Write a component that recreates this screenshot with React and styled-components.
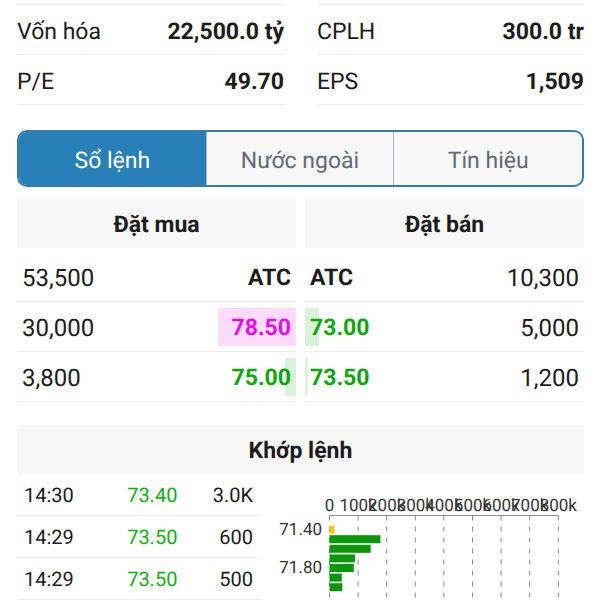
import { useState } from "react";
import styled, { createGlobalStyle } from "styled-components";

const GlobalStyle = createGlobalStyle`
  * {
    box-sizing: border-box;
  }
  body {
    margin: 0;
    background: #fff;
    color: #1c1c1c;
    font-family: Roboto, "Noto Sans", sans-serif;
    font-size: 23px;
    line-height: 28px;
    text-rendering: geometricPrecision;
  }
`;
const Page = styled.main`
  padding: 4px 16px 0 17px;
`;
const Stats = styled.dl`
  display: grid;
  grid-template-columns: 1fr 1fr;
  column-gap: 33px;
  margin: 0;
`;
const Stat = styled.div`
  display: flex;
  align-items: center;
  justify-content: space-between;
  height: 50px;
  padding-top: 4px;
  border-bottom: 1px solid #efefef;

  &:nth-child(-n + 2) {
    height: 51px;
    border-top: 1px solid #efefef;
  }
`;
const StatName = styled.dt``;
const StatValue = styled.dd`
  margin: 0;
  font-weight: 700;
`;
const Tabs = styled.div`
  display: grid;
  grid-template-columns: repeat(3, 1fr);
  height: 57px;
  margin: 25px 0 12px;
  overflow: hidden;
  border: 2px solid #3a7ca8;
  border-radius: 10px;
  background: #f7f7f7;
`;
const Tab = styled.button`
  border: 0;
  border-right: 1px solid #b0b6be;
  padding: 4px 0 0;
  background: ${(props) => (props.$active ? "#2980b9" : "transparent")};
  color: ${(props) => (props.$active ? "#fff" : "#636a73")};
  font: inherit;
  text-rendering: inherit;
  cursor: pointer;

  &:last-child {
    border-right: 0;
  }
`;
const Books = styled.div`
  display: grid;
  grid-template-columns: 1fr 1fr;
  gap: 9px;
`;
const BookTable = styled.table`
  width: 100%;
  border-collapse: separate;
  border-spacing: 0;
`;
const BookTitle = styled.th`
  height: 49px;
  padding: 2px 0 0;
  background: #f7f7f7;
  font-weight: 700;
`;
const BookRow = styled.tr`
  height: 50px;

  &:first-child {
    height: 54px;
  }
  &:first-child td {
    padding-top: 6px;
  }
`;
const BookCell = styled.td`
  width: 50%;
  padding: 2px 5px 0;
  border-bottom: 1px solid #efefef;
  font-size: 24px;
  text-align: ${(props) => props.$align};
`;
const PriceCell = styled(BookCell)`
  color: ${(props) => props.$color};
  font-size: 23px;
  font-weight: 700;
  background: linear-gradient(${(props) => props.$fill}, ${(props) => props.$fill})
    ${(props) => props.$align} center / ${(props) => props.$depth}% 38px no-repeat;
`;
const SectionTitle = styled.h2`
  height: 49px;
  margin: 23px 0 0;
  padding-top: 2px;
  background: #f7f7f7;
  font-size: 23px;
  font-weight: 700;
  line-height: 48px;
  text-align: center;
`;
const Matched = styled.div`
  display: grid;
  grid-template-columns: 3fr 4fr;
  align-items: start;
`;
const TradeTable = styled.table`
  width: 100%;
  table-layout: fixed;
  border-collapse: separate;
  border-spacing: 0;
  font-size: 20px;
`;
const TradeCell = styled.td`
  width: ${(props) => props.$width};
  height: 42px;
  padding: 0 ${(props) => (props.$price ? "0" : "7px")};
  border-bottom: 1px solid #efefef;
  color: ${(props) => (props.$price ? "#10b010" : "inherit")};
  text-align: ${(props) => props.$align || "left"};
`;
const Chart = styled.svg`
  display: block;
  width: 100%;
  font-size: 17px;
  fill: #333;
`;

const MAGENTA = { color: "#e80ce8", fill: "#fadcfa" };
const GREEN = { color: "#0aa80a", fill: "#dcf1dc" };
const PLAIN = { color: "#1c1c1c", fill: "transparent" };

const stats = [
  ["Vốn hóa", "22,500.0 tỷ"],
  ["CPLH", "300.0 tr"],
  ["P/E", "49.70"],
  ["EPS", "1,509"],
];
const tabs = ["Sổ lệnh", "Nước ngoài", "Tín hiệu"];
const bids = [
  { volume: "53,500", price: "ATC", depth: 0, tone: PLAIN },
  { volume: "30,000", price: "78.50", depth: 28, tone: MAGENTA },
  { volume: "3,800", price: "75.00", depth: 4, tone: GREEN },
];
const asks = [
  { volume: "10,300", price: "ATC", depth: 0, tone: PLAIN },
  { volume: "5,000", price: "73.00", depth: 5, tone: GREEN },
  { volume: "1,200", price: "73.50", depth: 1, tone: GREEN },
];
const trades = [
  ["14:30", "73.40", "3.0K"],
  ["14:29", "73.50", "600"],
  ["14:29", "73.50", "500"],
];
// matched volume per price step, in thousands
const volumes = [18, 178, 144, 89, 85, 43, 45];
const prices = ["71.40", "71.80"];
const ticks = [0, 1, 2, 3, 4, 5, 6, 7, 8];

const AXIS_X = 69.5;
const AXIS_Y = 41.5;
const TICK = 28.6;

const Book = ({ title, side, rows }) => {
  const isBid = side === "bid";
  return (
    <BookTable>
      <thead>
        <tr>
          <BookTitle colSpan={2}>{title}</BookTitle>
        </tr>
      </thead>
      <tbody>
        {rows.map((row) => {
          // depth is a share of the whole table, the price cell is half of it
          const price = (
            <PriceCell
              $align={isBid ? "right" : "left"}
              $color={row.tone.color}
              $fill={row.tone.fill}
              $depth={row.depth * 2}
            >
              {row.price}
            </PriceCell>
          );
          return (
            <BookRow key={row.price}>
              {!isBid && price}
              <BookCell $align={isBid ? "left" : "right"}>{row.volume}</BookCell>
              {isBid && price}
            </BookRow>
          );
        })}
      </tbody>
    </BookTable>
  );
};

const VolumeChart = () => (
  <Chart viewBox="0 0 324 126" role="img" aria-label="Khối lượng theo giá">
    {ticks.map((tick) => (
      <g key={tick}>
        <line
          x1={AXIS_X + tick * TICK}
          x2={AXIS_X + tick * TICK}
          y1={AXIS_Y}
          y2="126"
          stroke="#8c8c8c"
          strokeDasharray="5 6"
        />
        <text x={AXIS_X + tick * TICK} y="37" textAnchor="middle">
          {tick === 0 ? "0" : `${tick}00k`}
        </text>
      </g>
    ))}
    <line x1={AXIS_X} x2={AXIS_X + 8 * TICK} y1={AXIS_Y} y2={AXIS_Y} stroke="#8c8c8c" />
    {volumes.map((volume, i) => (
      <rect
        key={i}
        x={AXIS_X}
        y={51.6 + i * 9.6}
        width={(volume * TICK) / 100}
        height="8"
        fill={i === 0 ? "#fbc520" : "#0a970a"}
      />
    ))}
    {prices.map((price, i) => (
      <text key={price} x="62" y={61 + i * 38.4} textAnchor="end">
        {price}
      </text>
    ))}
  </Chart>
);

const App = () => {
  const [activeTab, setActiveTab] = useState(0);

  return (
    <Page>
      <GlobalStyle />
      <Stats>
        {stats.map(([name, value]) => (
          <Stat key={name}>
            <StatName>{name}</StatName>
            <StatValue>{value}</StatValue>
          </Stat>
        ))}
      </Stats>
      <Tabs role="tablist">
        {tabs.map((tab, i) => (
          <Tab
            key={tab}
            type="button"
            role="tab"
            aria-selected={i === activeTab}
            $active={i === activeTab}
            onClick={() => setActiveTab(i)}
          >
            {tab}
          </Tab>
        ))}
      </Tabs>
      <Books>
        <Book title="Đặt mua" side="bid" rows={bids} />
        <Book title="Đặt bán" side="ask" rows={asks} />
      </Books>
      <SectionTitle>Khớp lệnh</SectionTitle>
      <Matched>
        <TradeTable>
          <tbody>
            {trades.map(([time, price, volume], i) => (
              <tr key={i}>
                <TradeCell $width="35%">{time}</TradeCell>
                <TradeCell $width="31%" $align="right" $price>
                  {price}
                </TradeCell>
                <TradeCell $width="34%" $align="right">
                  {volume}
                </TradeCell>
              </tr>
            ))}
          </tbody>
        </TradeTable>
        <VolumeChart />
      </Matched>
    </Page>
  );
};

export default App;
